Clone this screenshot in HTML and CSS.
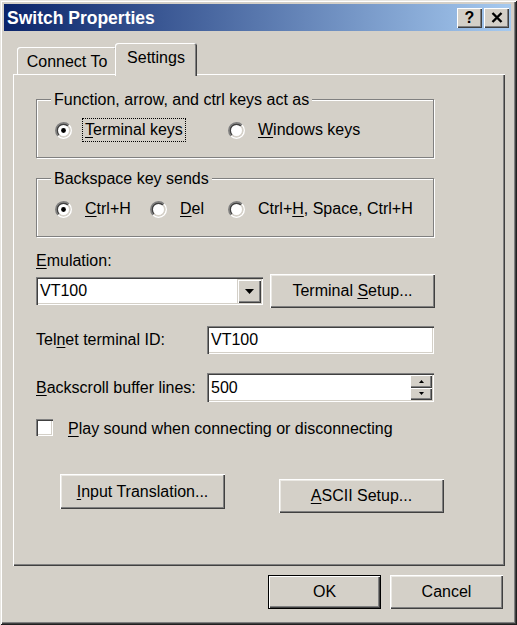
FILE: index.html
```html
<!DOCTYPE html>
<html lang="en">
<head>
<meta charset="utf-8">
<title>Switch Properties</title>
<link rel="stylesheet" href="styles.css">
</head>
<body>
<div class="window">
  <div class="titlebar">
    <span class="title">Switch Properties</span>
    <div class="caps">
      <span class="cap cap-help">?</span>
      <span class="cap"><svg width="12" height="11" viewBox="0 0 12 11"><path d="M1.5 1L10.5 10M10.5 1L1.5 10" stroke="#000" stroke-width="2.4" fill="none"/></svg></span>
    </div>
  </div>
  <div class="client">
    <div class="tabs">
      <div class="tab">Connect To</div>
      <div class="tab tab-active">Settings</div>
    </div>
    <div class="panel">
      <fieldset class="group">
        <legend>Function, arrow, and ctrl keys act as</legend>
        <div class="opts">
          <label class="opt opt-w173">
            <svg class="radio" width="17" height="17" viewBox="0 0 17 17"><circle cx="8.5" cy="8.5" r="6" fill="#fff"/><path d="M3.02 13.98A7.75 7.75 0 0 1 13.98 3.02" fill="none" stroke="#808080" stroke-width="1.5"/><path d="M13.98 3.02A7.75 7.75 0 0 1 3.02 13.98" fill="none" stroke="#fff" stroke-width="1.5"/><path d="M4.08 12.92A6.25 6.25 0 0 1 12.92 4.08" fill="none" stroke="#404040" stroke-width="1.5"/><path d="M12.92 4.08A6.25 6.25 0 0 1 4.08 12.92" fill="none" stroke="#d4d0c8" stroke-width="1.5"/><circle cx="8.5" cy="8.5" r="2.4" fill="#000"/></svg>
            <span class="lbl focus"><u>T</u>erminal keys</span>
          </label>
          <label class="opt">
            <svg class="radio" width="17" height="17" viewBox="0 0 17 17"><circle cx="8.5" cy="8.5" r="6" fill="#fff"/><path d="M3.02 13.98A7.75 7.75 0 0 1 13.98 3.02" fill="none" stroke="#808080" stroke-width="1.5"/><path d="M13.98 3.02A7.75 7.75 0 0 1 3.02 13.98" fill="none" stroke="#fff" stroke-width="1.5"/><path d="M4.08 12.92A6.25 6.25 0 0 1 12.92 4.08" fill="none" stroke="#404040" stroke-width="1.5"/><path d="M12.92 4.08A6.25 6.25 0 0 1 4.08 12.92" fill="none" stroke="#d4d0c8" stroke-width="1.5"/></svg>
            <span class="lbl"><u>W</u>indows keys</span>
          </label>
        </div>
      </fieldset>

      <fieldset class="group group-2">
        <legend>Backspace key sends</legend>
        <div class="opts">
          <label class="opt opt-w95">
            <svg class="radio" width="17" height="17" viewBox="0 0 17 17"><circle cx="8.5" cy="8.5" r="6" fill="#fff"/><path d="M3.02 13.98A7.75 7.75 0 0 1 13.98 3.02" fill="none" stroke="#808080" stroke-width="1.5"/><path d="M13.98 3.02A7.75 7.75 0 0 1 3.02 13.98" fill="none" stroke="#fff" stroke-width="1.5"/><path d="M4.08 12.92A6.25 6.25 0 0 1 12.92 4.08" fill="none" stroke="#404040" stroke-width="1.5"/><path d="M12.92 4.08A6.25 6.25 0 0 1 4.08 12.92" fill="none" stroke="#d4d0c8" stroke-width="1.5"/><circle cx="8.5" cy="8.5" r="2.4" fill="#000"/></svg>
            <span class="lbl"><u>C</u>trl+H</span>
          </label>
          <label class="opt opt-w78">
            <svg class="radio" width="17" height="17" viewBox="0 0 17 17"><circle cx="8.5" cy="8.5" r="6" fill="#fff"/><path d="M3.02 13.98A7.75 7.75 0 0 1 13.98 3.02" fill="none" stroke="#808080" stroke-width="1.5"/><path d="M13.98 3.02A7.75 7.75 0 0 1 3.02 13.98" fill="none" stroke="#fff" stroke-width="1.5"/><path d="M4.08 12.92A6.25 6.25 0 0 1 12.92 4.08" fill="none" stroke="#404040" stroke-width="1.5"/><path d="M12.92 4.08A6.25 6.25 0 0 1 4.08 12.92" fill="none" stroke="#d4d0c8" stroke-width="1.5"/></svg>
            <span class="lbl"><u>D</u>el</span>
          </label>
          <label class="opt">
            <svg class="radio" width="17" height="17" viewBox="0 0 17 17"><circle cx="8.5" cy="8.5" r="6" fill="#fff"/><path d="M3.02 13.98A7.75 7.75 0 0 1 13.98 3.02" fill="none" stroke="#808080" stroke-width="1.5"/><path d="M13.98 3.02A7.75 7.75 0 0 1 3.02 13.98" fill="none" stroke="#fff" stroke-width="1.5"/><path d="M4.08 12.92A6.25 6.25 0 0 1 12.92 4.08" fill="none" stroke="#404040" stroke-width="1.5"/><path d="M12.92 4.08A6.25 6.25 0 0 1 4.08 12.92" fill="none" stroke="#d4d0c8" stroke-width="1.5"/></svg>
            <span class="lbl">Ctrl+<u>H</u>, Space, Ctrl+H</span>
          </label>
        </div>
      </fieldset>

      <div class="field-label"><u>E</u>mulation:</div>
      <div class="emu-row">
        <div class="combo">
          <span class="combo-text">VT100</span>
          <span class="drop"><svg width="9" height="5" viewBox="0 0 9 5"><path d="M0 0H9L4.5 5Z" fill="#000"/></svg></span>
        </div>
        <div class="btn btn-term"><span>Terminal <u>S</u>etup...</span></div>
      </div>

      <div class="row row-telnet">
        <span class="row-label">Tel<u>n</u>et terminal ID:</span>
        <div class="edit">VT100</div>
      </div>

      <div class="row row-back">
        <span class="row-label"><u>B</u>ackscroll buffer lines:</span>
        <div class="edit edit-spin">
          <span class="edit-text">500</span>
          <span class="spin">
            <span class="spin-btn"><svg width="5" height="3" viewBox="0 0 5 3"><path d="M0 3H5L2.5 0Z" fill="#000"/></svg></span>
            <span class="spin-btn"><svg width="5" height="3" viewBox="0 0 5 3"><path d="M0 0H5L2.5 3Z" fill="#000"/></svg></span>
          </span>
        </div>
      </div>

      <div class="check-row">
        <span class="checkbox"></span>
        <span class="check-text"><u>P</u>lay sound when connecting or disconnecting</span>
      </div>

      <div class="btn-row">
        <div class="btn btn-input"><span><u>I</u>nput Translation...</span></div>
        <div class="btn btn-ascii"><span><u>A</u>SCII Setup...</span></div>
      </div>
    </div>

    <div class="footer">
      <div class="btn btn-default"><span>OK</span></div>
      <div class="btn btn-foot"><span>Cancel</span></div>
    </div>
  </div>
</div>
</body>
</html>
```

FILE: styles.css
```css
* { box-sizing: border-box; }
html, body { margin: 0; padding: 0; }
body {
  background: #d4d0c8;
  font-family: "Liberation Sans", Arial, sans-serif;
  font-size: 16px;
  color: #000;
}
u { text-decoration: underline; text-underline-offset: 2px; }

.window {
  width: 517px;
  height: 625px;
  display: flex;
  flex-direction: column;
  padding: 4px 6px 4px 4px;
  background: #d4d0c8;
  box-shadow: inset 1px 1px #e8e6e1, inset -1px -1px #202020,
              inset 2px 2px #ffffff, inset -2px -2px #404040,
              inset -3px -3px #808080;
}

.titlebar {
  flex: none;
  height: 27px;
  display: flex;
  align-items: center;
  justify-content: space-between;
  padding: 0 2px 0 3px;
  background: linear-gradient(to right, #0a246a, #a6caf0);
}
.title { color: #fff; font-weight: bold; font-size: 17.5px; line-height: 20px; }
.caps { display: flex; gap: 2px; }
.cap {
  width: 25px;
  height: 20px;
  display: flex;
  align-items: center;
  justify-content: center;
  background: #d4d0c8;
  box-shadow: inset 1px 1px #fff, inset -1px -1px #404040, inset -2px -2px #808080;
}
.cap-help { font-weight: bold; font-size: 16px; line-height: 16px; }

.client {
  flex: 1;
  display: flex;
  flex-direction: column;
  padding-left: 9px;
}

.tabs {
  display: flex;
  align-items: flex-end;
  height: 31px;
  margin-top: 12px;
  padding-left: 4px;
}
.tab {
  width: 100px;
  height: 27px;
  display: flex;
  align-items: center;
  justify-content: center;
  padding-top: 2px;
  border-radius: 3px 3px 0 0;
  background: #d4d0c8;
  box-shadow: inset 1px 1px #fff, inset -1px 0 #404040, inset -2px 0 #808080;
}
.tab-active {
  width: 82px;
  height: 33px;
  margin-left: -2px;
  margin-bottom: -2px;
  padding-top: 0;
  padding-bottom: 4px;
  position: relative;
  z-index: 1;
}

.panel {
  flex: none;
  width: 492px;
  height: 492px;
  padding: 16px 0 0 23px;
  background: #d4d0c8;
  box-shadow: inset 1px 1px #fff, inset -1px -1px #404040, inset -2px -2px #808080;
}

.group {
  width: 398px;
  margin: 0;
  min-width: 0;
  padding: 11px 0 17px 14px;
  border: 1px solid #808080;
  box-shadow: inset 1px 1px #fff, 1px 1px 0 #fff;
}
.group legend {
  padding: 0 3px;
  line-height: 19px;
  background: #d4d0c8;
}
.group-2 { margin-top: 11px; }

.opts {
  display: flex;
  align-items: center;
  height: 20px;
  padding-left: 4px;
}
.opt { display: flex; align-items: center; flex: none; }
.opt-w173 { width: 173px; }
.opt-w95 { width: 95px; }
.opt-w78 { width: 78px; }
.radio { flex: none; display: block; }
.lbl {
  margin-left: 10px;
  padding: 1px 2px;
  border: 1px dotted transparent;
  line-height: 20px;
  white-space: nowrap;
}
.lbl.focus { border-color: #000; }

.field-label { margin-top: 15px; line-height: 18px; }

.emu-row {
  display: flex;
  align-items: center;
  height: 34px;
  margin-top: 4px;
}
.combo {
  width: 227px;
  height: 28px;
  display: flex;
  align-items: center;
  padding: 2px 2px 2px 4px;
  background: #fff;
  box-shadow: inset 1px 1px #808080, inset 2px 2px #404040, inset -1px -1px #fff, inset -2px -2px #d4d0c8;
}
.combo-text { flex: 1; }
.drop {
  width: 24px;
  height: 24px;
  display: flex;
  align-items: center;
  justify-content: center;
  background: #d4d0c8;
  box-shadow: inset 1px 1px #d4d0c8, inset 2px 2px #fff, inset -1px -1px #404040, inset -2px -2px #808080;
}

.btn {
  flex: none;
  width: 165px;
  height: 34px;
  display: flex;
  align-items: center;
  justify-content: center;
  background: #d4d0c8;
  white-space: nowrap;
  box-shadow: inset 1px 1px #fff, inset -1px -1px #404040, inset -2px -2px #808080, inset 2px 2px #ebe9e4;
}
.btn-term { margin-left: 7px; }

.row { display: flex; align-items: center; }
.row-label { width: 171px; flex: none; }
.row-telnet { height: 28px; margin-top: 18px; }
.row-back { height: 29px; margin-top: 19px; }
.edit {
  width: 227px;
  height: 100%;
  display: flex;
  align-items: center;
  padding: 2px 2px 2px 4px;
  background: #fff;
  box-shadow: inset 1px 1px #808080, inset 2px 2px #404040, inset -1px -1px #fff, inset -2px -2px #d4d0c8;
}
.edit-text { flex: 1; }
.spin {
  display: flex;
  flex-direction: column;
  width: 22px;
  height: 25px;
}
.spin-btn {
  flex: 1;
  display: flex;
  align-items: center;
  justify-content: center;
  background: #d4d0c8;
  box-shadow: inset 1px 1px #fff, inset -1px -1px #404040, inset -2px -2px #808080;
}

.check-row {
  display: flex;
  align-items: center;
  height: 18px;
  margin-top: 16px;
  white-space: nowrap;
}
.checkbox {
  width: 17px;
  height: 17px;
  flex: none;
  margin-right: 15px;
  background: #fff;
  box-shadow: inset 1px 1px #808080, inset 2px 2px #404040, inset -1px -1px #fff, inset -2px -2px #d4d0c8;
}
.check-text { padding-top: 3px; }

.btn-row {
  display: flex;
  align-items: flex-start;
  margin-top: 38px;
}
.btn-input { margin-left: 24px; height: 35px; }
.btn-ascii { margin-left: 54px; margin-top: 5px; }

.footer {
  display: flex;
  justify-content: flex-end;
  gap: 9px;
  margin-top: 9px;
  padding-right: 8px;
}
.btn-foot, .btn-default { width: 113px; }
.btn-default {
  border: 1px solid #000;
  box-shadow: inset 1px 1px #fff, inset -1px -1px #404040, inset -2px -2px #808080;
}
```
